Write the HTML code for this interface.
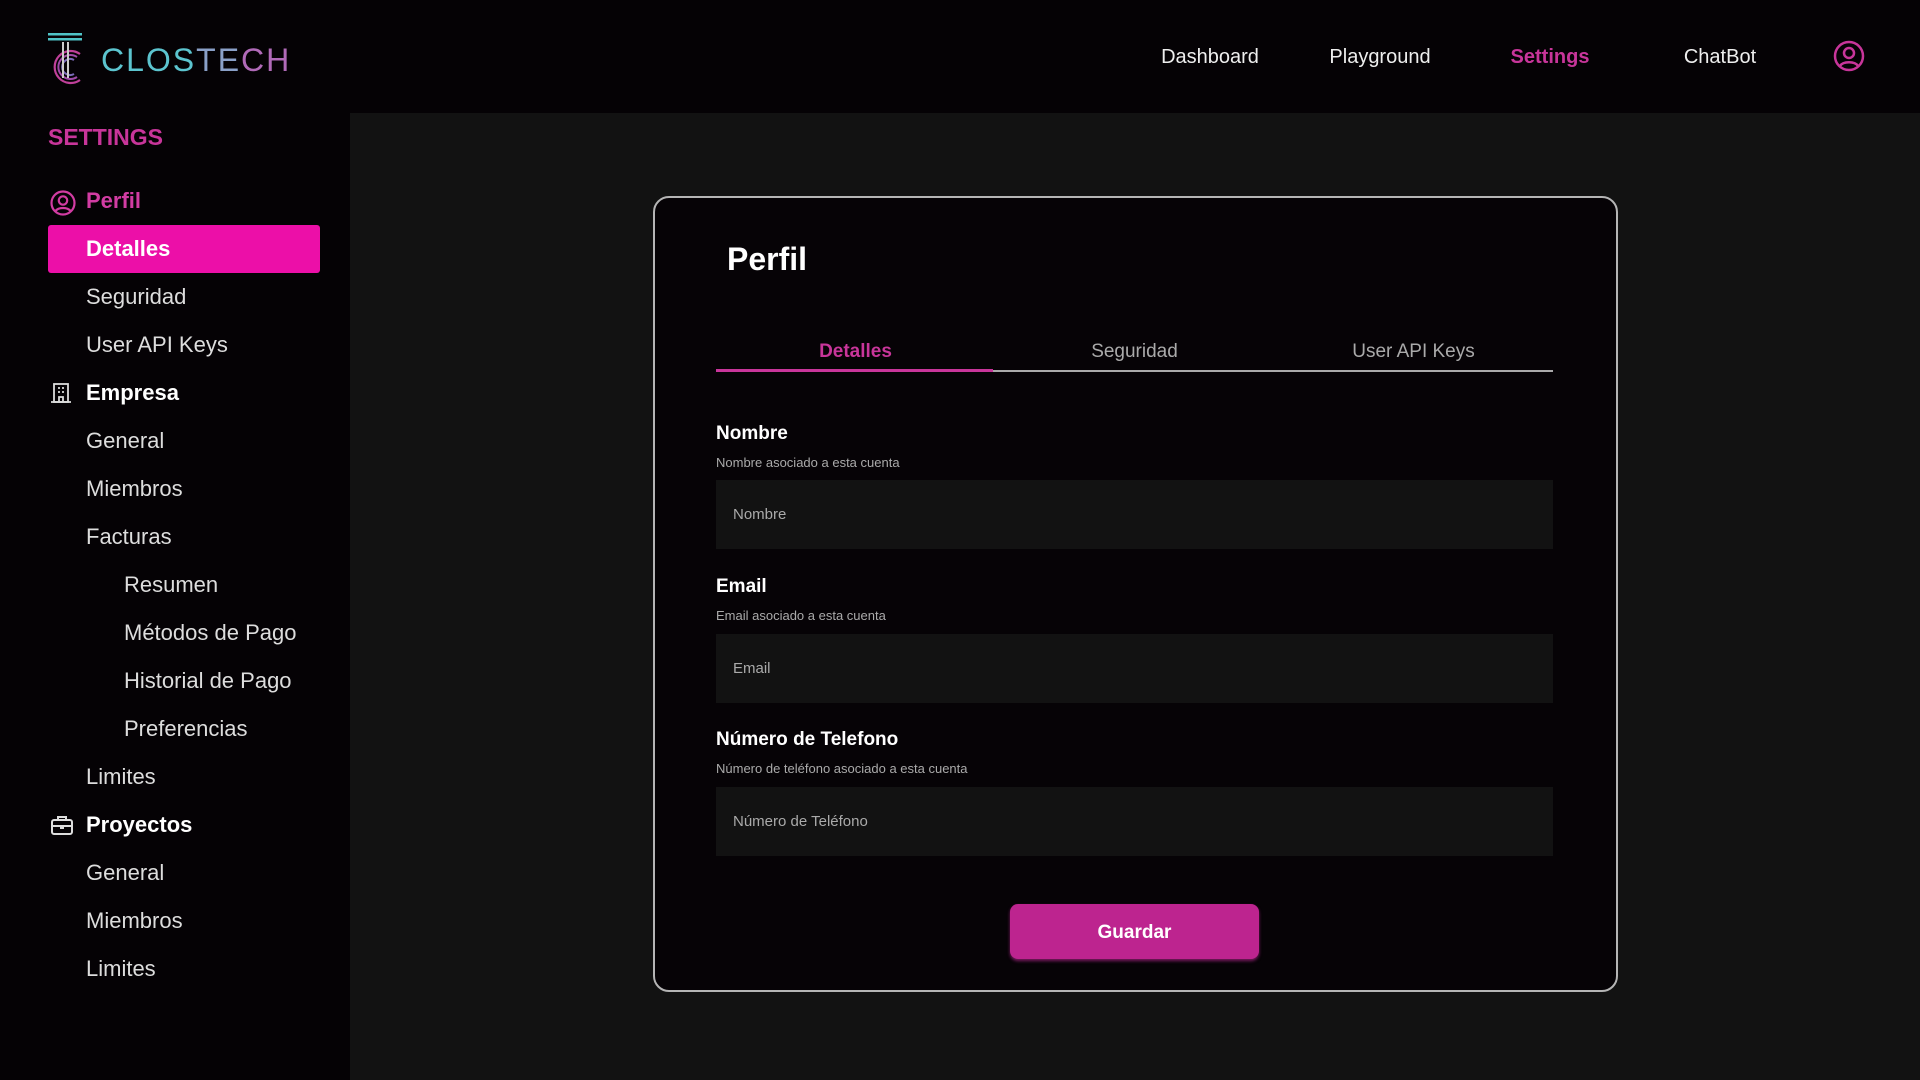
<!DOCTYPE html>
<html><head><meta charset="utf-8"><style>
*{margin:0;padding:0;box-sizing:border-box}
body{width:1920px;height:1080px;background:#050205;font-family:"Liberation Sans",sans-serif;color:#eee;position:relative;overflow:hidden}
.abs{position:absolute}
.nav{position:absolute;top:46px;font-size:20px;color:#eee;transform:translateX(-50%)}
.side{position:absolute;left:48px;top:177px;width:272px}
.row{height:48px;line-height:48px;font-size:22px;color:#ddd;padding-left:38px;position:relative}
.row.h{font-weight:bold;color:#fff}
.row.s{padding-left:76px}
.row.act{background:#ec0fa8;border-radius:3px;color:#fff;font-weight:bold}
.row svg{position:absolute;left:2px;top:13px}
.main{position:absolute;left:350px;top:113px;width:1570px;height:967px;background:#121212}
.card{position:absolute;left:653px;top:196px;width:965px;height:796px;border:2px solid #b5b5b5;border-radius:16px;background:#060306}
.lbl{position:absolute;left:716px;font-size:19px;font-weight:bold;color:#fff}
.desc{position:absolute;left:716px;font-size:13px;color:#aaa}
.inp{position:absolute;left:716px;width:837px;height:69px;background:#121212;font-size:15px;color:#aaa;padding-left:17px;line-height:69px}
</style></head><body>
<svg class="abs" style="left:46px;top:32px" width="40" height="54" viewBox="0 0 40 54">
<rect x="2" y="1" width="34" height="2.5" fill="#4fc3c7"/><rect x="2" y="6" width="34" height="2.5" fill="#4fc3c7"/>
<path d="M34 22 A16 16 0 1 0 34 48" fill="none" stroke="#c0409a" stroke-width="2.2"/>
<path d="M31 25 A12 12 0 1 0 31 45" fill="none" stroke="#a04aa8" stroke-width="2"/>
<path d="M28 28 A8 8 0 1 0 28 42" fill="none" stroke="#7a6ab8" stroke-width="2"/>
<rect x="16" y="10" width="2" height="36" fill="#ccc"/><rect x="21" y="10" width="2" height="36" fill="#ccc"/>
</svg>
<div class="abs" style="left:101px;top:42px;font-size:32px;letter-spacing:2px;color:#5cc4cf">CLOS<span style="color:#8aa0c8">TE</span><span style="color:#b06ab8">CH</span></div>
<div class="nav" style="left:1210px">Dashboard</div>
<div class="nav" style="left:1380px">Playground</div>
<div class="nav" style="left:1550px;color:#c8359a;font-weight:bold">Settings</div>
<div class="nav" style="left:1720px">ChatBot</div>
<svg class="abs" style="left:1833px;top:40px" width="32" height="32" viewBox="0 0 32 32" fill="none" stroke="#c8359a" stroke-width="2.5"><circle cx="16" cy="16" r="14"/><circle cx="16" cy="13" r="5"/><path d="M7 26c3-5 15-5 18 0"/></svg>
<div class="abs" style="left:48px;top:124px;font-size:23px;font-weight:bold;color:#c8359a">SETTINGS</div>
<div class="main"></div>
<div class="side">
<div class="row h" style="color:#d23ca3"><svg width="26" height="26" viewBox="0 0 26 26" fill="none" stroke="#d23ca3" stroke-width="2.2"><circle cx="13" cy="13" r="11.5"/><circle cx="13" cy="10.5" r="4.2"/><path d="M5.5 21c3-4 12-4 15 0"/></svg>Perfil</div>
<div class="row act">Detalles</div>
<div class="row">Seguridad</div>
<div class="row">User API Keys</div>
<div class="row h"><svg width="22" height="22" viewBox="0 0 22 22" fill="none" stroke="#ddd" stroke-width="1.8"><rect x="4" y="2" width="14" height="18"/><path d="M1 20h20M8 6h2M12 6h2M8 10h2M12 10h2M9 20v-5h4v5"/></svg>Empresa</div>
<div class="row">General</div>
<div class="row">Miembros</div>
<div class="row">Facturas</div>
<div class="row s">Resumen</div>
<div class="row s">Métodos de Pago</div>
<div class="row s">Historial de Pago</div>
<div class="row s">Preferencias</div>
<div class="row">Limites</div>
<div class="row h"><svg width="24" height="22" viewBox="0 0 24 22" fill="none" stroke="#ddd" stroke-width="2"><rect x="2" y="6" width="20" height="14" rx="2"/><path d="M8 6V3h8v3M2 12h20M11 12v2h2v-2"/></svg>Proyectos</div>
<div class="row">General</div>
<div class="row">Miembros</div>
<div class="row">Limites</div>
</div>
<div class="card"></div>
<div class="abs" style="left:727px;top:241px;font-size:32px;font-weight:bold;color:#fff">Perfil</div>
<div class="abs" style="left:716px;top:370px;width:837px;height:2px;background:#aaa"></div>
<div class="abs" style="left:716px;top:369px;width:277px;height:3px;background:#c8359a"></div>
<div class="abs" style="left:716px;top:341px;width:279px;text-align:center;font-size:19px;font-weight:bold;color:#c8359a">Detalles</div>
<div class="abs" style="left:995px;top:341px;width:279px;text-align:center;font-size:19px;color:#aaa">Seguridad</div>
<div class="abs" style="left:1274px;top:341px;width:279px;text-align:center;font-size:19px;color:#aaa">User API Keys</div>
<div class="lbl" style="top:423px">Nombre</div>
<div class="desc" style="top:455px">Nombre asociado a esta cuenta</div>
<div class="inp" style="top:480px">Nombre</div>
<div class="lbl" style="top:576px">Email</div>
<div class="desc" style="top:608px">Email asociado a esta cuenta</div>
<div class="inp" style="top:634px">Email</div>
<div class="lbl" style="top:729px">Número de Telefono</div>
<div class="desc" style="top:761px">Número de teléfono asociado a esta cuenta</div>
<div class="inp" style="top:787px">Número de Teléfono</div>
<div class="abs" style="left:1010px;top:904px;width:249px;height:55px;background:#bd248f;border-radius:8px;text-align:center;line-height:57px;font-size:19px;font-weight:bold;color:#fff;box-shadow:0 2px 3px #7a1a60">Guardar</div>
</body></html>
